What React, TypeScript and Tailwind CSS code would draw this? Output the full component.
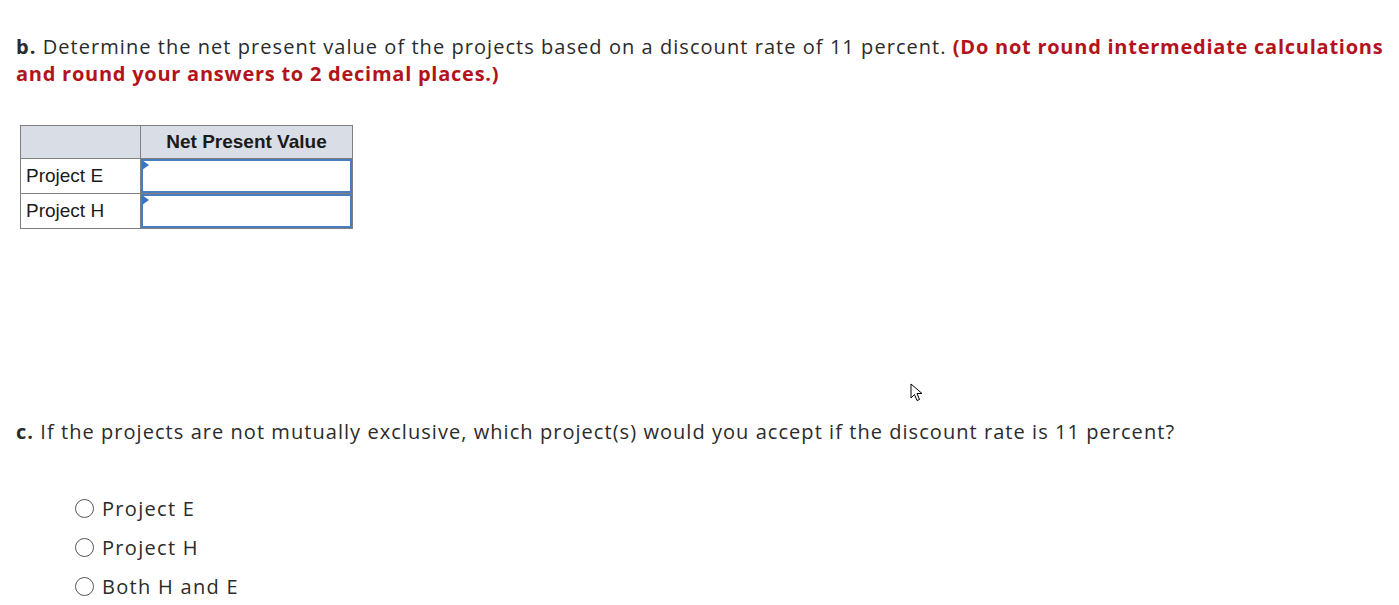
export default function App() {
  const rows = ['Project E', 'Project H'];
  const options = ['Project E', 'Project H', 'Both H and E'];

  return (
    <div className="relative w-[1399px] h-[605px] overflow-hidden bg-white text-[#2b2b2b] font-['Open_Sans','Lato',sans-serif]">
      <div className="pl-4 pr-3 pt-[33px]">
        {/* part b */}
        <p className="text-[20px] leading-[27px] tracking-[1.05px]">
          <span className="font-bold">b.</span> Determine the net present value of the projects based on a discount rate of 11 percent.{' '}
          <span className="font-bold text-[#b3131b] tracking-[0.75px]">
            (Do not round intermediate calculations
            <br />
            and round your answers to 2 decimal places.)
          </span>
        </p>

        <table className="mt-[38px] ml-1 border-collapse font-['Liberation_Sans',Arial,sans-serif] text-[19px] text-[#1a1a1a]">
          <thead>
            <tr className="h-[33px] bg-[#d9dde6]">
              <th className="w-[120px] border border-[#808080]"></th>
              <th className="w-[212px] border border-[#808080] font-bold">Net Present Value</th>
            </tr>
          </thead>
          <tbody>
            {rows.map(r => (
              <tr key={r} className="h-[35px]">
                <td className="border border-[#808080] px-[5px]">{r}</td>
                <td className="border border-[#808080] p-0">
                  <div className="relative h-[34px] border-2 border-[#4a7dbf]">
                    <span className="absolute -left-[1px] -top-[1px] w-0 h-0 border-t-[5px] border-b-[5px] border-l-[7px] border-t-transparent border-b-transparent border-l-[#3a74c2]"></span>
                  </div>
                </td>
              </tr>
            ))}
          </tbody>
        </table>

        {/* part c */}
        <p className="mt-[189px] text-[20px] leading-[27px] tracking-[1.05px]">
          <span className="font-bold">c.</span> If the projects are not mutually exclusive, which project(s) would you accept if the discount rate is 11 percent?
        </p>

        <div className="mt-[50px] ml-[59px] flex flex-col gap-[12px]">
          {options.map(o => (
            <label key={o} className="flex items-center gap-[8px] h-[27px] text-[20px] tracking-[1.3px]">
              <span className="w-[19px] h-[19px] rounded-full border border-[#555]"></span>
              <span>{o}</span>
            </label>
          ))}
        </div>
      </div>

      {/* mouse pointer */}
      <svg className="absolute left-[910px] top-[383px]" width="14" height="20" viewBox="0 0 14 20">
        <path d="M1 1 L1 15 L4.5 11.5 L7 17.5 L9.5 16.5 L7 10.5 L12 10.5 Z" fill="#fff" stroke="#000" strokeWidth="1" strokeLinejoin="round" />
      </svg>
    </div>
  );
}
